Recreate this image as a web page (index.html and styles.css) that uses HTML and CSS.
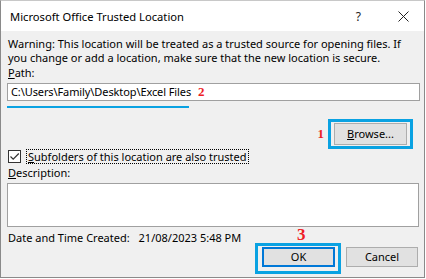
FILE: index.html
```html
<!DOCTYPE html>
<html lang="en">
<head>
    <meta charset="UTF-8">
    <title>Microsoft Office Trusted Location</title>
    <link rel="stylesheet" href="styles.css">
</head>
<body>

<div class="dialog">
    <div class="titlebar">
        <span class="title">Microsoft Office Trusted Location</span>
        <span class="help">?</span>
        <svg class="close" width="11" height="11" viewBox="0 0 11 11">
            <path d="M0.5 0.5 L10.5 10.5 M10.5 0.5 L0.5 10.5" stroke="#222" stroke-width="1" fill="none"/>
        </svg>
    </div>

    <div class="content">
        <p class="warning">Warning: This location will be treated as a trusted source for opening files. If you change or add a location, make sure that the new location is secure.</p>

        <div class="label"><u>P</u>ath:</div>
        <div class="textbox path">C:\Users\Family\Desktop\Excel Files<span class="mark mark-2">2</span></div>
        <div class="underline"></div>

        <div class="browse-row">
            <span class="mark mark-1">1</span>
            <div class="highlight">
                <div class="btn browse"><u>B</u>rowse...</div>
            </div>
        </div>

        <div class="check-row">
            <span class="checkbox">
                <svg width="11" height="11" viewBox="0 0 11 11">
                    <path d="M1.5 5.5 L4.2 8.2 L9.8 2.5" stroke="#333" stroke-width="1.2" fill="none"/>
                </svg>
            </span>
            <span class="check-label"><u>S</u>ubfolders of this location are also trusted</span>
        </div>

        <div class="label desc-label"><u>D</u>escription:</div>
        <div class="textbox desc"></div>

        <div class="date-row">
            <span class="date-name">Date and Time Created:</span>
            <span>21/08/2023 5:48 PM</span>
        </div>

        <div class="button-row">
            <div class="highlight ok-wrap">
                <span class="mark mark-3">3</span>
                <div class="btn ok">OK</div>
            </div>
            <div class="btn cancel">Cancel</div>
        </div>
    </div>
</div>

</body>
</html>
```

FILE: styles.css
```css
body {
    margin: 0;
    background: #fff;
    font-family: "Noto Sans", sans-serif;
    font-size: 11px;
    color: #000;
}
.dialog {
    width: 423px;
    height: 276px;
    border: 1px solid #8a8a8a;
    border-top-color: #c8c8c8;
    background: #f0f0f0;
}
.titlebar {
    height: 30px;
    background: #fff;
    display: flex;
    align-items: center;
    padding-left: 9px;
}
.title {
    font-size: 11.2px;
    flex: 1;
}
.help {
    font-size: 12px;
    margin-right: 37px;
    color: #222;
}
.close {
    margin-right: 15px;
}
.content {
    padding: 0 5px 0 6px;
}
.warning {
    margin: 6px 0 0 1px;
    line-height: 14px;
}
.label {
    margin-top: 1px;
    margin-left: 1px;
    line-height: 14px;
}
.textbox {
    background: #fff;
    border: 1px solid #a0a0a0;
    box-sizing: border-box;
}
.path {
    margin-top: 3px;
    height: 18px;
    width: 413px;
    line-height: 16px;
    padding-left: 3px;
    letter-spacing: -0.1px;
}
.underline {
    margin-top: 5px;
    width: 182px;
    height: 2px;
    background: #0aa2e2;
}
.mark {
    font-family: "Liberation Serif", serif;
    font-weight: bold;
    color: #ee1c25;
    font-size: 13px;
    letter-spacing: 0;
}
.mark-2 {
    margin-left: 7px;
}
.browse-row {
    margin-top: 11px;
    display: flex;
    justify-content: flex-end;
    align-items: center;
    margin-right: 6px;
}
.mark-1 {
    margin-right: 4px;
}
.highlight {
    border: 3px solid #0aa2e2;
    padding: 1px 3px;
}
.btn {
    background: #e1e1e1;
    border: 1px solid #adadad;
    box-sizing: border-box;
    text-align: center;
}
.browse {
    width: 73px;
    height: 22px;
    line-height: 20px;
}
.check-row {
    margin-top: -1px;
    height: 16px;
    display: flex;
    align-items: center;
}
.checkbox {
    width: 13px;
    height: 13px;
    box-sizing: border-box;
    border: 1px solid #333;
    background: #fff;
    margin-left: 1px;
    display: flex;
    align-items: center;
    justify-content: center;
}
.check-label {
    margin-left: 5px;
    border: 1px dotted #000;
    padding: 0 1px;
    line-height: 13px;
}
.desc-label {
    margin-top: 2px;
}
.desc {
    margin-top: 3px;
    height: 44px;
    width: 412px;
}
.date-row {
    margin-top: 4px;
    margin-left: 1px;
    line-height: 14px;
}
.date-name {
    margin-right: 6px;
}
.button-row {
    margin-top: -2px;
    display: flex;
    justify-content: flex-end;
    align-items: flex-start;
    margin-right: 1px;
}
.ok-wrap {
    position: relative;
    padding: 1px 3px 4px 4px;
    margin-right: 5px;
}
.mark-3 {
    position: absolute;
    top: -21px;
    left: 39px;
    font-size: 17px;
}
.ok {
    width: 73px;
    height: 20px;
    line-height: 16px;
    border: 2px solid #0078d7;
}
.cancel {
    width: 72px;
    height: 20px;
    line-height: 18px;
    margin-top: 4px;
}
```
